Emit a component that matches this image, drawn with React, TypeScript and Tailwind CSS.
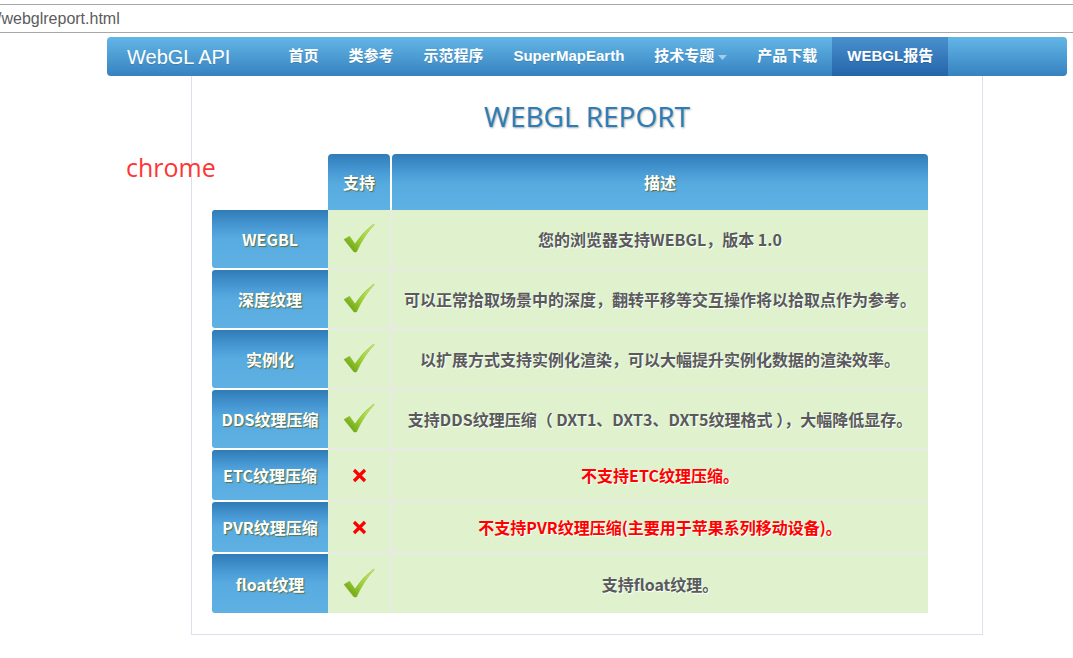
import React from "react";

type Row = {
  label: string;
  ok: boolean;
  desc: string;
  h: string;
};

const rows: Row[] = [
  { label: "WEGBL", ok: true, desc: "您的浏览器支持WEBGL，版本 1.0", h: "h-[58px]" },
  { label: "深度纹理", ok: true, desc: "可以正常拾取场景中的深度，翻转平移等交互操作将以拾取点作为参考。", h: "h-[58px]" },
  { label: "实例化", ok: true, desc: "以扩展方式支持实例化渲染，可以大幅提升实例化数据的渲染效率。", h: "h-[58px]" },
  { label: "DDS纹理压缩", ok: true, desc: "支持DDS纹理压缩（ DXT1、DXT3、DXT5纹理格式 ），大幅降低显存。", h: "h-[58px]" },
  { label: "ETC纹理压缩", ok: false, desc: "不支持ETC纹理压缩。", h: "h-[50px]" },
  { label: "PVR纹理压缩", ok: false, desc: "不支持PVR纹理压缩(主要用于苹果系列移动设备)。", h: "h-[50px]" },
  { label: "float纹理", ok: true, desc: "支持float纹理。", h: "h-[59px]" },
];

function Check() {
  return (
    <svg width="32" height="32" viewBox="0 0 32 32">
      <defs>
        <linearGradient id="ck" x1="1" y1="0" x2="0" y2="1">
          <stop offset="0%" stopColor="#d2ee72" />
          <stop offset="55%" stopColor="#98cc2c" />
          <stop offset="100%" stopColor="#5e9410" />
        </linearGradient>
      </defs>
      <path
        d="M1 16.5 L6.5 13.2 L12 21 Q19 10 30.5 1 L31.2 1.8 Q21.5 11.5 13.5 29 L11 29 Z"
        fill="url(#ck)"
        stroke="#7aa820"
        strokeWidth="0.4"
      />
    </svg>
  );
}

function Cross() {
  return (
    <svg width="15" height="15" viewBox="0 0 15 15">
      <path d="M2 2 L13 13 M13 2 L2 13" stroke="#ff0000" strokeWidth="3.2" strokeLinecap="butt" />
    </svg>
  );
}

const navItems = ["首页", "类参考", "示范程序", "SuperMapEarth"];

export default function App() {
  return (
    <div className="relative min-h-screen w-full bg-white font-['Liberation_Sans','Noto_Sans_CJK_SC',sans-serif]">
      {/* address bar */}
      <div className="mt-[4px] flex h-[29px] items-center border-y border-[#a8a8a8] bg-white">
        <span className="-ml-[3px] text-[16px] text-[#5c5c5c]">/webglreport.html</span>
      </div>

      {/* navbar */}
      <div className="ml-[107px] mt-[4px] flex h-[39px] w-[960px] items-stretch rounded-[4px] bg-[linear-gradient(to_bottom,#63b6e6,#3682c0)] text-white">
        <div className="flex items-center pl-[20px] text-[20px] leading-none [text-shadow:0_1px_0_rgba(0,0,0,0.15)]">
          WebGL API
        </div>
        <div className="ml-[43px] flex items-stretch text-[15px] font-bold">
          {navItems.map((t) => (
            <div key={t} className="flex items-center px-[15px] [text-shadow:0_1px_0_rgba(0,0,0,0.12)]">
              {t}
            </div>
          ))}
          <div className="flex items-center px-[15px] [text-shadow:0_1px_0_rgba(0,0,0,0.12)]">
            技术专题
            <svg width="9" height="5" viewBox="0 0 9 5" className="ml-[4px] mt-[1px]">
              <path d="M0 0 L9 0 L4.5 5 Z" fill="#9fcdec" />
            </svg>
          </div>
          <div className="flex items-center px-[15px] [text-shadow:0_1px_0_rgba(0,0,0,0.12)]">产品下载</div>
          <div className="flex items-center bg-[linear-gradient(to_bottom,#4a90ce,#2465aa)] px-[15px] [text-shadow:0_1px_0_rgba(0,0,0,0.15)]">
            WEBGL报告
          </div>
        </div>
      </div>

      {/* content container */}
      <div className="ml-[191px] h-[559px] w-[792px] border-x border-b border-[#d9e2ea]">
        <div className="pt-[20px] text-center font-['Open_Sans',sans-serif] text-[28px] leading-[40px] text-[#2a7db8] [text-shadow:1px_1px_2px_rgba(0,0,0,0.35)]">
          WEBGL REPORT
        </div>

        <div className="ml-[20px] mt-[18px] w-[716px] font-['Noto_Sans_CJK_SC',sans-serif] text-[16px] font-bold">
          {/* header */}
          <div className="flex h-[56px]">
            <div className="w-[116px]" />
            <div className="flex w-[62px] items-center justify-center rounded-t-[4px] bg-[linear-gradient(to_bottom,#2f7cb9_0%,#4b9dd6_35%,#58abdf_55%,#5eb1e3_100%)] text-white [text-shadow:1px_1px_1px_rgba(90,90,20,0.75)]">
              支持
            </div>
            <div className="ml-[2px] flex flex-1 items-center justify-center rounded-t-[4px] bg-[linear-gradient(to_bottom,#2f7cb9_0%,#4b9dd6_35%,#58abdf_55%,#5eb1e3_100%)] text-white [text-shadow:1px_1px_1px_rgba(90,90,20,0.75)]">
              描述
            </div>
          </div>

          {/* body */}
          <div className="flex">
            <div className="flex w-[116px] flex-col gap-[2px]">
              {rows.map((r) => (
                <div
                  key={r.label}
                  className={`${r.h} flex items-center justify-center rounded-l-[3px] bg-[linear-gradient(to_bottom,#2e7bb8_0%,#4b9cd6_32%,#58abe0_50%,#5fb1e3_100%)] text-white [text-shadow:1px_1px_1px_rgba(90,90,20,0.75)]`}
                >
                  {r.label}
                </div>
              ))}
            </div>
            <div className="flex flex-1 flex-col gap-[2px] bg-[#e7ebe3]">
              {rows.map((r) => (
                <div key={r.label} className={`${r.h} flex gap-[2px]`}>
                  <div className="flex w-[62px] items-center justify-center bg-[#dff2cd]">
                    {r.ok ? <Check /> : <Cross />}
                  </div>
                  <div
                    className={`flex flex-1 items-center justify-center bg-[#dff2cd] ${
                      r.ok
                        ? "text-[#5a5a5a] [text-shadow:1px_1px_1px_#ffffff]"
                        : "text-[#ff0000] [text-shadow:1px_1px_1px_#ffffff]"
                    }`}
                  >
                    {r.desc}
                  </div>
                </div>
              ))}
            </div>
          </div>
        </div>
      </div>

      {/* annotation */}
      <div className="absolute left-[126px] top-[145px] font-['Open_Sans',sans-serif] text-[25px] leading-[36px] text-[#ff3535]">
        chrome
      </div>
    </div>
  );
}
